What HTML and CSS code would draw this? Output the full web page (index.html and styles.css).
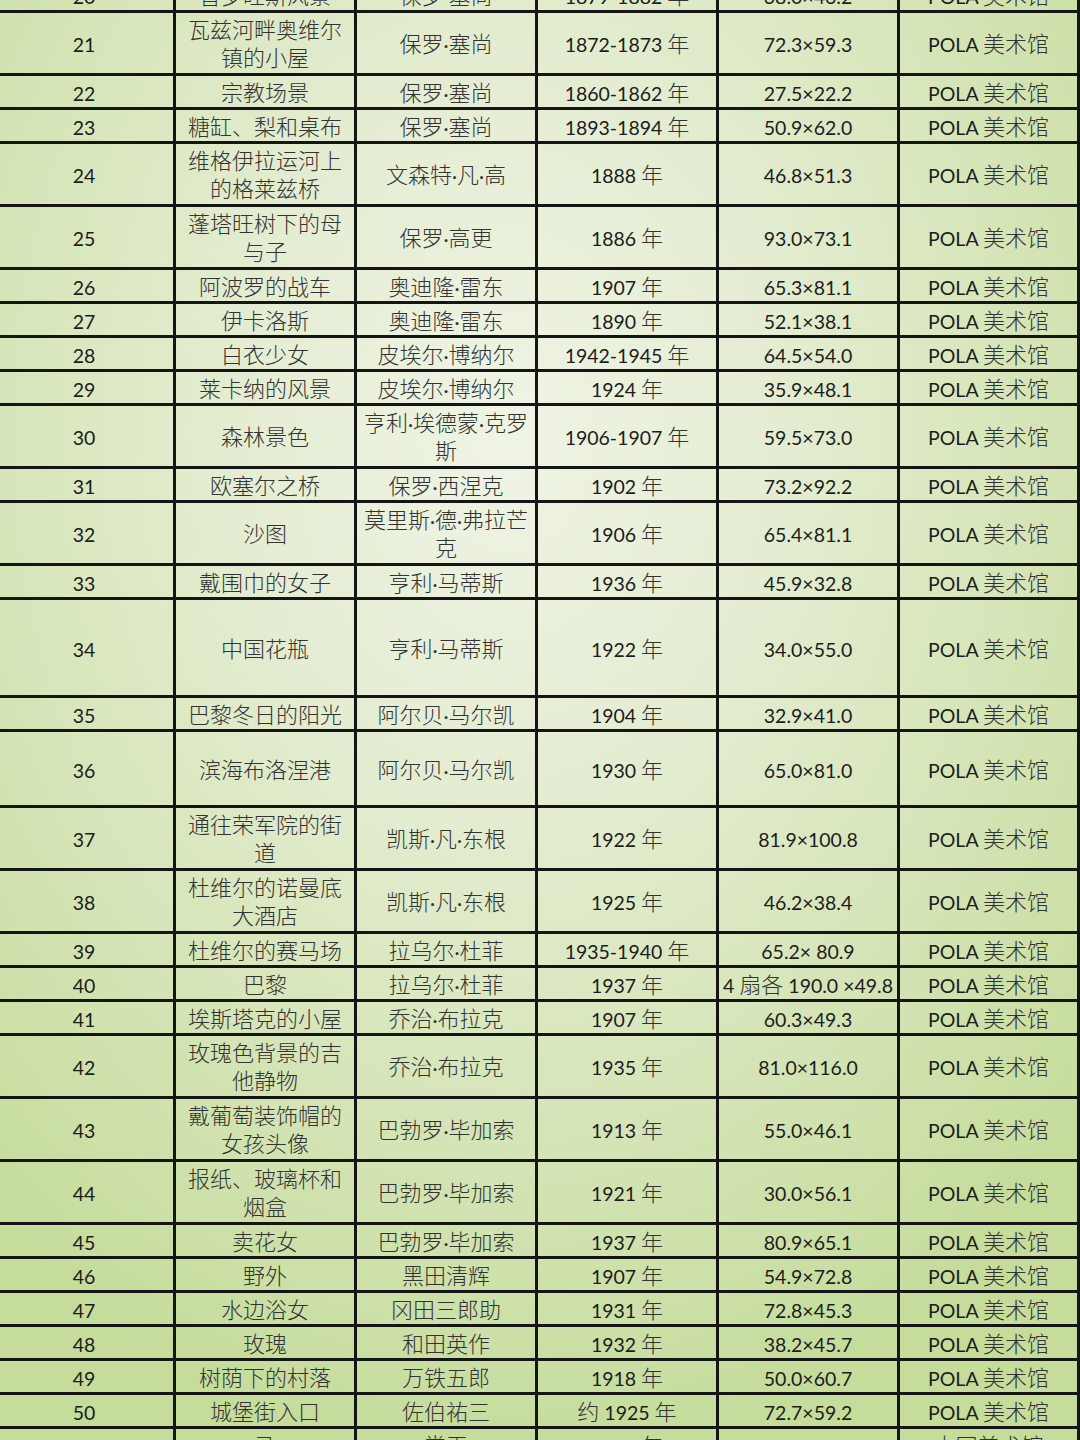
FILE: index.html
```html
<!DOCTYPE html>
<html lang="zh-CN">
<head>
<meta charset="utf-8">
<title>作品列表</title>
<link rel="stylesheet" href="styles.css">
</head>
<body>
<div class="page">
<table class="works">
<colgroup>
<col class="c"><col class="c"><col class="c"><col class="c"><col class="c"><col class="c-last">
</colgroup>
<tbody>
<tr class="s"><td><span class="l">20</span></td><td>普罗旺斯风景</td><td>保罗<span class="dot">·</span>塞尚</td><td><span class="l">1879-1882 </span>年</td><td><span class="l">38.0×46.2</span></td><td><span class="l">POLA </span>美术馆</td></tr>
<tr class="d"><td><span class="l">21</span></td><td>瓦兹河畔奥维尔<br>镇的小屋</td><td>保罗<span class="dot">·</span>塞尚</td><td><span class="l">1872-1873 </span>年</td><td><span class="l">72.3×59.3</span></td><td><span class="l">POLA </span>美术馆</td></tr>
<tr class="s"><td><span class="l">22</span></td><td>宗教场景</td><td>保罗<span class="dot">·</span>塞尚</td><td><span class="l">1860-1862 </span>年</td><td><span class="l">27.5×22.2</span></td><td><span class="l">POLA </span>美术馆</td></tr>
<tr class="s"><td><span class="l">23</span></td><td>糖缸、梨和桌布</td><td>保罗<span class="dot">·</span>塞尚</td><td><span class="l">1893-1894 </span>年</td><td><span class="l">50.9×62.0</span></td><td><span class="l">POLA </span>美术馆</td></tr>
<tr class="d"><td><span class="l">24</span></td><td>维格伊拉运河上<br>的格莱兹桥</td><td>文森特<span class="dot">·</span>凡<span class="dot">·</span>高</td><td><span class="l">1888 </span>年</td><td><span class="l">46.8×51.3</span></td><td><span class="l">POLA </span>美术馆</td></tr>
<tr class="d"><td><span class="l">25</span></td><td>蓬塔旺树下的母<br>与子</td><td>保罗<span class="dot">·</span>高更</td><td><span class="l">1886 </span>年</td><td><span class="l">93.0×73.1</span></td><td><span class="l">POLA </span>美术馆</td></tr>
<tr class="s"><td><span class="l">26</span></td><td>阿波罗的战车</td><td>奥迪隆<span class="dot">·</span>雷东</td><td><span class="l">1907 </span>年</td><td><span class="l">65.3×81.1</span></td><td><span class="l">POLA </span>美术馆</td></tr>
<tr class="s"><td><span class="l">27</span></td><td>伊卡洛斯</td><td>奥迪隆<span class="dot">·</span>雷东</td><td><span class="l">1890 </span>年</td><td><span class="l">52.1×38.1</span></td><td><span class="l">POLA </span>美术馆</td></tr>
<tr class="s"><td><span class="l">28</span></td><td>白衣少女</td><td>皮埃尔<span class="dot">·</span>博纳尔</td><td><span class="l">1942-1945 </span>年</td><td><span class="l">64.5×54.0</span></td><td><span class="l">POLA </span>美术馆</td></tr>
<tr class="s"><td><span class="l">29</span></td><td>莱卡纳的风景</td><td>皮埃尔<span class="dot">·</span>博纳尔</td><td><span class="l">1924 </span>年</td><td><span class="l">35.9×48.1</span></td><td><span class="l">POLA </span>美术馆</td></tr>
<tr class="d"><td><span class="l">30</span></td><td>森林景色</td><td>亨利<span class="dot">·</span>埃德蒙<span class="dot">·</span>克罗<br>斯</td><td><span class="l">1906-1907 </span>年</td><td><span class="l">59.5×73.0</span></td><td><span class="l">POLA </span>美术馆</td></tr>
<tr class="s"><td><span class="l">31</span></td><td>欧塞尔之桥</td><td>保罗<span class="dot">·</span>西涅克</td><td><span class="l">1902 </span>年</td><td><span class="l">73.2×92.2</span></td><td><span class="l">POLA </span>美术馆</td></tr>
<tr class="d"><td><span class="l">32</span></td><td>沙图</td><td>莫里斯<span class="dot">·</span>德<span class="dot">·</span>弗拉芒<br>克</td><td><span class="l">1906 </span>年</td><td><span class="l">65.4×81.1</span></td><td><span class="l">POLA </span>美术馆</td></tr>
<tr class="s"><td><span class="l">33</span></td><td>戴围巾的女子</td><td>亨利<span class="dot">·</span>马蒂斯</td><td><span class="l">1936 </span>年</td><td><span class="l">45.9×32.8</span></td><td><span class="l">POLA </span>美术馆</td></tr>
<tr class="x98"><td><span class="l">34</span></td><td>中国花瓶</td><td>亨利<span class="dot">·</span>马蒂斯</td><td><span class="l">1922 </span>年</td><td><span class="l">34.0×55.0</span></td><td><span class="l">POLA </span>美术馆</td></tr>
<tr class="s"><td><span class="l">35</span></td><td>巴黎冬日的阳光</td><td>阿尔贝<span class="dot">·</span>马尔凯</td><td><span class="l">1904 </span>年</td><td><span class="l">32.9×41.0</span></td><td><span class="l">POLA </span>美术馆</td></tr>
<tr class="x76"><td><span class="l">36</span></td><td>滨海布洛涅港</td><td>阿尔贝<span class="dot">·</span>马尔凯</td><td><span class="l">1930 </span>年</td><td><span class="l">65.0×81.0</span></td><td><span class="l">POLA </span>美术馆</td></tr>
<tr class="d"><td><span class="l">37</span></td><td>通往荣军院的街<br>道</td><td>凯斯<span class="dot">·</span>凡<span class="dot">·</span>东根</td><td><span class="l">1922 </span>年</td><td><span class="l">81.9×100.8</span></td><td><span class="l">POLA </span>美术馆</td></tr>
<tr class="d"><td><span class="l">38</span></td><td>杜维尔的诺曼底<br>大酒店</td><td>凯斯<span class="dot">·</span>凡<span class="dot">·</span>东根</td><td><span class="l">1925 </span>年</td><td><span class="l">46.2×38.4</span></td><td><span class="l">POLA </span>美术馆</td></tr>
<tr class="s"><td><span class="l">39</span></td><td>杜维尔的赛马场</td><td>拉乌尔<span class="dot">·</span>杜菲</td><td><span class="l">1935-1940 </span>年</td><td><span class="l">65.2× 80.9</span></td><td><span class="l">POLA </span>美术馆</td></tr>
<tr class="s"><td><span class="l">40</span></td><td>巴黎</td><td>拉乌尔<span class="dot">·</span>杜菲</td><td><span class="l">1937 </span>年</td><td class="tight"><span class="l">4 </span>扇各<span class="l"> 190.0 ×49.8</span></td><td><span class="l">POLA </span>美术馆</td></tr>
<tr class="s"><td><span class="l">41</span></td><td>埃斯塔克的小屋</td><td>乔治<span class="dot">·</span>布拉克</td><td><span class="l">1907 </span>年</td><td><span class="l">60.3×49.3</span></td><td><span class="l">POLA </span>美术馆</td></tr>
<tr class="d"><td><span class="l">42</span></td><td>玫瑰色背景的吉<br>他静物</td><td>乔治<span class="dot">·</span>布拉克</td><td><span class="l">1935 </span>年</td><td><span class="l">81.0×116.0</span></td><td><span class="l">POLA </span>美术馆</td></tr>
<tr class="d"><td><span class="l">43</span></td><td>戴葡萄装饰帽的<br>女孩头像</td><td>巴勃罗<span class="dot">·</span>毕加索</td><td><span class="l">1913 </span>年</td><td><span class="l">55.0×46.1</span></td><td><span class="l">POLA </span>美术馆</td></tr>
<tr class="d"><td><span class="l">44</span></td><td>报纸、玻璃杯和<br>烟盒</td><td>巴勃罗<span class="dot">·</span>毕加索</td><td><span class="l">1921 </span>年</td><td><span class="l">30.0×56.1</span></td><td><span class="l">POLA </span>美术馆</td></tr>
<tr class="s"><td><span class="l">45</span></td><td>卖花女</td><td>巴勃罗<span class="dot">·</span>毕加索</td><td><span class="l">1937 </span>年</td><td><span class="l">80.9×65.1</span></td><td><span class="l">POLA </span>美术馆</td></tr>
<tr class="s"><td><span class="l">46</span></td><td>野外</td><td>黑田清辉</td><td><span class="l">1907 </span>年</td><td><span class="l">54.9×72.8</span></td><td><span class="l">POLA </span>美术馆</td></tr>
<tr class="s"><td><span class="l">47</span></td><td>水边浴女</td><td>冈田三郎助</td><td><span class="l">1931 </span>年</td><td><span class="l">72.8×45.3</span></td><td><span class="l">POLA </span>美术馆</td></tr>
<tr class="s"><td><span class="l">48</span></td><td>玫瑰</td><td>和田英作</td><td><span class="l">1932 </span>年</td><td><span class="l">38.2×45.7</span></td><td><span class="l">POLA </span>美术馆</td></tr>
<tr class="s"><td><span class="l">49</span></td><td>树荫下的村落</td><td>万铁五郎</td><td><span class="l">1918 </span>年</td><td><span class="l">50.0×60.7</span></td><td><span class="l">POLA </span>美术馆</td></tr>
<tr class="s"><td><span class="l">50</span></td><td>城堡街入口</td><td>佐伯祐三</td><td>约<span class="l"> 1925 </span>年</td><td><span class="l">72.7×59.2</span></td><td><span class="l">POLA </span>美术馆</td></tr>
<tr class="s"><td><span class="l">51</span></td><td>马</td><td>常玉</td><td><span class="l">1930 </span>年</td><td><span class="l">60.0×81.0</span></td><td>中国美术馆</td></tr>
</tbody>
</table>
</div>
</body>
</html>
```

FILE: styles.css
```css
html, body {
  margin: 0;
  padding: 0;
}

body {
  width: 1080px;
  height: 1440px;
  overflow: hidden;
  background: radial-gradient(ellipse 72% 72% at 47% 30%, #eff4e5 0%, #e4edd2 35%, #d4e4b5 70%, #c5dc9b 100%);
}

.page {
  width: 1080px;
  height: 1440px;
  overflow: hidden;
}

.works {
  border-collapse: collapse;
  table-layout: fixed;
  width: 1088px;
  margin-left: -8px;
  margin-top: -24px;
  font-family: "Noto Sans CJK SC", "Noto Sans", sans-serif;
  font-size: 22px;
  font-weight: 300;
  line-height: 28px;
  color: #333333;
}

.works col.c {
  width: 181px;
}

.works col.c-last {
  width: 180px;
}

.works td {
  border: 3px solid #151515;
  padding: 0 4px 2px;
  text-align: center;
  vertical-align: middle;
  white-space: nowrap;
}

.works td.tight {
  padding: 0 0 2px;
  overflow: visible;
}

.works .l {
  font-family: Lato, "Liberation Sans", sans-serif;
  font-size: 19.5px;
  font-weight: 400;
  line-height: 1;
  color: #1c1c1c;
}

.works .dot {
  font-family: Lato, "Liberation Sans", sans-serif;
  font-size: 19.5px;
  font-weight: 400;
  line-height: 1;
  color: #333333;
}

.works tr.s { height: 34px; }
.works tr.d { height: 63px; }
.works tr.x98 { height: 98px; }
.works tr.x76 { height: 76px; }
```
